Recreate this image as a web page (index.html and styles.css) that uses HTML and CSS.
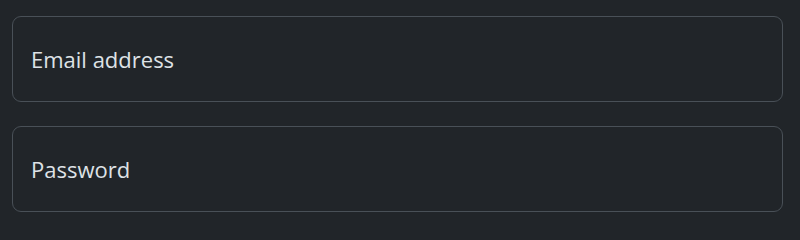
FILE: index.html
```html
<!DOCTYPE html>
<html lang="en">
<head>
<meta charset="utf-8">
<link rel="stylesheet" href="styles.css">
</head>
<body>
<form class="form">
  <div class="field"><span class="label">Email address</span></div>
  <div class="field"><span class="label">Password</span></div>
</form>
</body>
</html>
```
FILE: styles.css
```css
html, body {
  margin: 0;
  background: #212529;
}
.form {
  display: flex;
  flex-direction: column;
  gap: 24px;
  padding: 16px 17px 0 12px;
}
.field {
  height: 86px;
  box-sizing: border-box;
  border: 1px solid #495057;
  border-radius: 9px;
  display: flex;
  align-items: center;
  padding: 0 18px;
}
.label {
  font-family: "Open Sans", sans-serif;
  font-size: 22px;
  color: #dee2e6;
  line-height: 1;
}
```
